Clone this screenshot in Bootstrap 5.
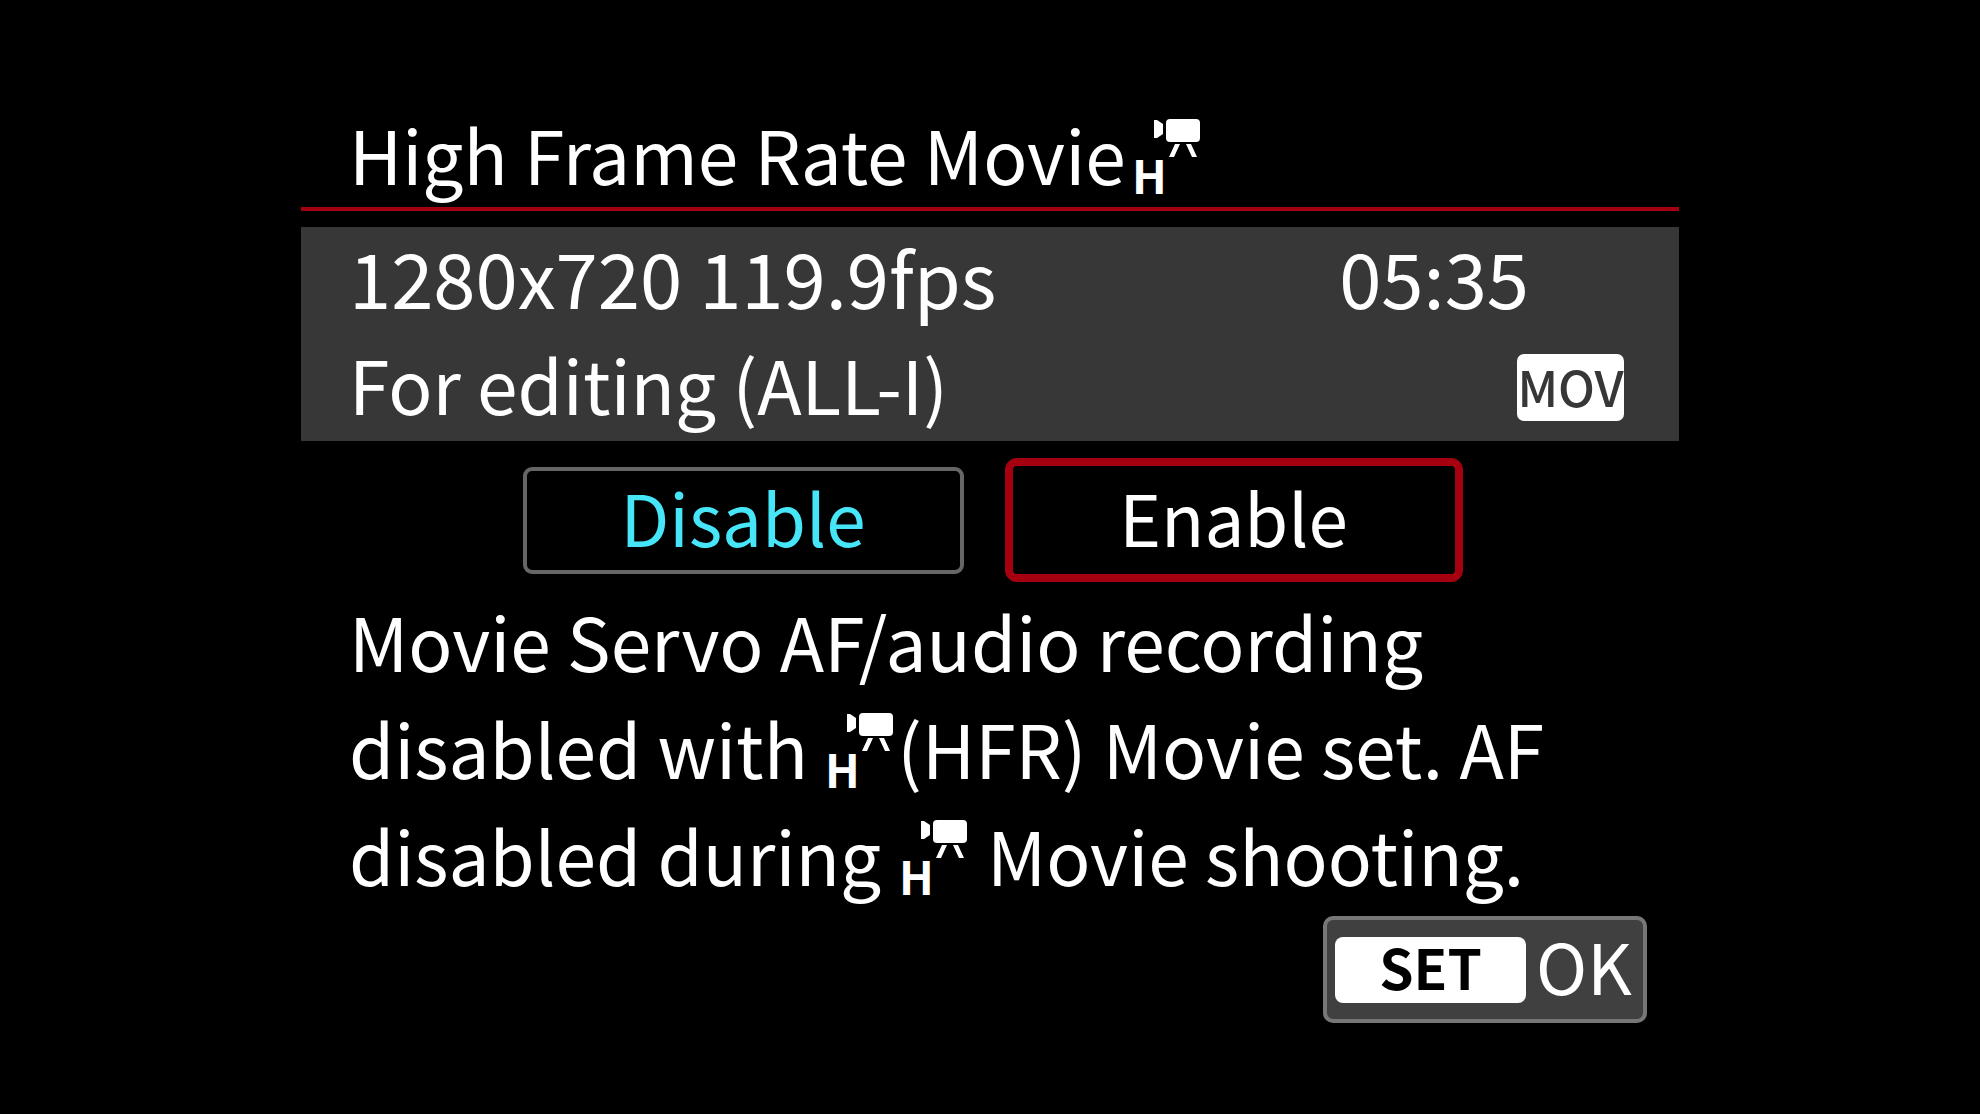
<!DOCTYPE html>
<html lang="en">
<head>
<meta charset="utf-8">
<meta name="viewport" content="width=device-width, initial-scale=1">
<title>High Frame Rate Movie</title>
<link href="https://cdn.jsdelivr.net/npm/bootstrap@5.3.0/dist/css/bootstrap.min.css" rel="stylesheet">
<style>
  body { background: #000; color: #fff; font-family: "Noto Sans CJK JP", "Noto Sans", sans-serif; font-size: 73px; line-height: 107px; }
  .screen { max-width: 1378px; padding-top: 100px; }
  .inset { padding-left: 48px; padding-right: 55px; }
  .menu-title { font-size: 73px; line-height: 107px; font-weight: 400; border-bottom: 4px solid #a50010; margin-bottom: 16px; }
  .info { background: #373737; }
  .info-line { height: 107px; line-height: 99px; }
  .figures { font-size: 76px; }
  .time { margin-right: 95px; }
  .format-tag { background: #fff; color: #373737; font-size: 49px; font-weight: 500; line-height: 63px; width: 107px; height: 67px; margin-top: 20px; border-radius: 7px; }
  .choices { padding: 16px 0 0 5px; gap: 41px; height: 142px; }
  .choice { background: #000; color: #fff; border: 8px solid #a50010; border-radius: 12px; font-size: 71px; line-height: 98px; width: 458px; height: 124px; padding: 0 0 8px; }
  .choice-current { color: #46e6f8; border: 4px solid #666; border-radius: 9px; line-height: 89px; width: 441px; height: 107px; }
  .message { padding-top: 4px; }
  .set-ok { background: #404040; color: #fff; border: 4px solid #777; border-radius: 10px; width: 324px; height: 107px; padding: 0 8px; margin: 8px 32px 0 0; font-size: 69px; line-height: 89px; }
  .set-key { background: #fff; color: #000; border-radius: 8px; width: 191px; height: 66px; font-size: 55px; line-height: 58px; font-weight: 700; }
  .ok-word { padding: 0 0 8px 10px; }
  .hfr { width: 66px; height: 76px; margin-left: 10px; vertical-align: -10px; fill: currentColor; font-size: 46px; font-weight: 700; overflow: visible; }
  .hfr-body { margin-left: 5px; margin-right: 2px; }
</style>
<script src="https://cdn.jsdelivr.net/npm/bootstrap@5.3.0/dist/js/bootstrap.bundle.min.js"></script>
</head>
<body>
<svg class="d-none" aria-hidden="true">
  <symbol id="movie-camera" viewBox="0 0 66 76">
    <path d="M18 1h3l6 4v10l-6 4h-3z"/>
    <rect x="30" y="0" width="34" height="23" rx="4"/>
    <path d="M39 25h5l-6 13h-5zM50 25h5l6 13h-5z"/>
  </symbol>
</svg>
<main class="screen mx-auto">
  <h1 class="menu-title inset">High Frame Rate Movie<svg class="hfr" role="img" aria-label="HFR movie"><use href="#movie-camera"/><text x="-4" y="75">H</text></svg></h1>
  <section class="info inset">
    <div class="info-line figures d-flex justify-content-between"><span>1280x720 119.9fps</span><span class="time">05:35</span></div>
    <div class="info-line d-flex justify-content-between align-items-start"><span>For editing (ALL-I)</span><span class="format-tag d-flex justify-content-center">MOV</span></div>
  </section>
  <div class="choices d-flex justify-content-center align-items-center">
    <button type="button" class="btn choice choice-current">Disable</button>
    <button type="button" class="btn choice">Enable</button>
  </div>
  <p class="message inset mb-0">Movie Servo AF/audio recording<br>disabled with <svg class="hfr hfr-body" role="img" aria-label="HFR movie"><use href="#movie-camera"/><text x="-4" y="75">H</text></svg>(HFR) Movie set. AF<br>disabled during <svg class="hfr hfr-body" role="img" aria-label="HFR movie"><use href="#movie-camera"/><text x="-4" y="75">H</text></svg> Movie shooting.</p>
  <div class="d-flex justify-content-end">
    <button type="button" class="btn set-ok d-flex align-items-center"><span class="set-key flex-shrink-0">SET</span><span class="ok-word">OK</span></button>
  </div>
</main>
</body>
</html>
